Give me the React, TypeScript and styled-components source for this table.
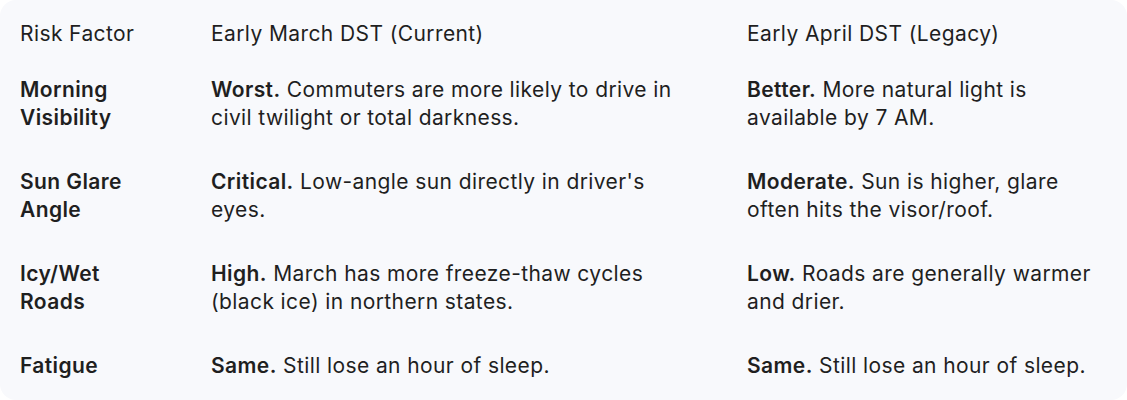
import * as React from "react";
import styled, { createGlobalStyle } from "styled-components";

const GlobalStyle = createGlobalStyle`
    body {
        margin: 0;
        background: #ffffff;
        font-family: Inter, Roboto, "Noto Sans", sans-serif;
    }
`

const Card = styled.div`
    background: #f8f9fc;
    border-radius: 16px;
    padding-top: 20px;
    padding-bottom: 2px;
`

const Grid = styled.div`
    display: grid;
    grid-template-columns: 191px 536px 1fr;
    color: #1f1f1f;
    font-size: 21px;
    line-height: 28px;
    letter-spacing: 0.4px;
`

const HeadCell = styled.div`
    padding: 0 20px 10px 20px;
    font-weight: 400;
`

// label column and middle column keep a wider right gutter so text wraps like the source
const Cell = styled.div<{ $gutter?: number, $label?: boolean }>`
    padding: 18px ${props => props.$gutter ?? 20}px 18px 20px;
    font-weight: ${props => props.$label ? 600 : 400};
`

const Strong = styled.b`
    font-weight: 600;
`

interface Row {
    factor: string,
    march: [string, string],
    april: [string, string]
}

const rows: Row[] = [
    { factor: "Morning Visibility", march: ["Worst.", "Commuters are more likely to drive in civil twilight or total darkness."], april: ["Better.", "More natural light is available by 7 AM."] },
    { factor: "Sun Glare Angle", march: ["Critical.", "Low-angle sun directly in driver's eyes."], april: ["Moderate.", "Sun is higher, glare often hits the visor/roof."] },
    { factor: "Icy/Wet Roads", march: ["High.", "March has more freeze-thaw cycles (black ice) in northern states."], april: ["Low.", "Roads are generally warmer and drier."] },
    { factor: "Fatigue", march: ["Same.", "Still lose an hour of sleep."], april: ["Same.", "Still lose an hour of sleep."] },
]

function App() {
    return (
        <>
            <GlobalStyle/>
            <Card>
                <Grid>
                    <HeadCell>Risk Factor</HeadCell>
                    <HeadCell>Early March DST (Current)</HeadCell>
                    <HeadCell>Early April DST (Legacy)</HeadCell>
                    {rows.map((row, index) => (
                        <React.Fragment key={index}>
                            <Cell $label $gutter={26}>{row.factor}</Cell>
                            <Cell $gutter={50}><Strong>{row.march[0]}</Strong> {row.march[1]}</Cell>
                            <Cell><Strong>{row.april[0]}</Strong> {row.april[1]}</Cell>
                        </React.Fragment>
                    ))}
                </Grid>
            </Card>
        </>
    )
}

export default App;
